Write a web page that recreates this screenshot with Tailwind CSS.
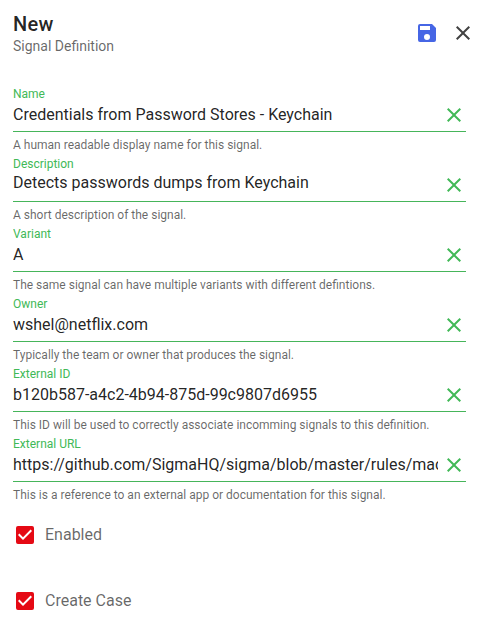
<!DOCTYPE html>
<html lang="en"><head><meta charset="utf-8"><title>New Signal Definition</title>
<script src="https://cdn.jsdelivr.net/npm/@tailwindcss/browser@4"></script></head>
<body class="bg-white font-['Roboto',sans-serif] text-black/87 w-[482px] h-[627px] overflow-hidden">
<header class="flex justify-between pl-[13px] pr-[7px] h-[88px]">
<div class="pt-[8px]"><h1 class="text-[20px] leading-[32px] font-medium tracking-[0.25px]">New</h1><p class="text-[14px] leading-[13px] text-black/60">Signal Definition</p></div>
<div class="flex gap-[12px] pt-[21px]">
<svg class="size-6" viewBox="0 0 24 24"><path fill="#4666e5" d="M15 9H5V5h10m-3 14a3 3 0 0 1-3-3 3 3 0 0 1 3-3 3 3 0 0 1 3 3 3 3 0 0 1-3 3m5-16H5a2 2 0 0 0-2 2v14a2 2 0 0 0 2 2h14a2 2 0 0 0 2-2V7l-4-4Z"/></svg>
<svg class="size-6" viewBox="0 0 24 24"><path fill="#424242" d="M19 6.41 17.59 5 12 10.59 6.41 5 5 6.41 10.59 12 5 17.59 6.41 19 12 13.41 17.59 19 19 17.59 13.41 12Z"/></svg>
</div></header>
<main id="fields" class="pl-[13px] pr-[16px]"></main>
<section class="pl-[13px] pt-[15px] text-[16px] text-black/60">
<label class="flex items-center h-6 gap-2 mb-[42px]"><svg class="size-6" viewBox="0 0 24 24"><path fill="#e50914" d="M10 17 5 12l1.41-1.42L10 14.17l7.59-7.59L19 8m0-5H5a2 2 0 0 0-2 2v14a2 2 0 0 0 2 2h14a2 2 0 0 0 2-2V5a2 2 0 0 0-2-2Z"/></svg>Enabled</label>
<label class="flex items-center h-6 gap-2"><svg class="size-6" viewBox="0 0 24 24"><path fill="#e50914" d="M10 17 5 12l1.41-1.42L10 14.17l7.59-7.59L19 8m0-5H5a2 2 0 0 0-2 2v14a2 2 0 0 0 2 2h14a2 2 0 0 0 2-2V5a2 2 0 0 0-2-2Z"/></svg>Create Case</label>
</section>
<script>
const fields=[["Name","Credentials from Password Stores - Keychain","A human readable display name for this signal."],["Description","Detects passwords dumps from Keychain","A short description of the signal."],["Variant","A","The same signal can have multiple variants with different defintions."],["Owner","wshel@netflix.com","Typically the team or owner that produces the signal."],["External ID","b120b587-a4c2-4b94-875d-99c9807d6955","This ID will be used to correctly associate incomming signals to this definition."],["External URL","https://github.com/SigmaHQ/sigma/blob/master/rules/macos","This is a reference to an external app or documentation for this signal."]];
document.getElementById("fields").innerHTML=fields.map(([l,v,h],i)=>`<div class="h-[70px]"><div class="h-[44px] border-b border-[#46b55a] flex justify-between"><div class="w-[425px] overflow-hidden whitespace-nowrap"><div class="text-[12px] leading-[12px] text-[#41b957]">${l}</div><div class="text-[16px] leading-[20px] ${i===1?"pt-[3px]":"pt-[5px]"}">${v}</div></div><svg class="size-6 mt-[15px]" viewBox="0 0 24 24"><path fill="#41b957" d="M19 6.41 17.59 5 12 10.59 6.41 5 5 6.41 10.59 12 5 17.59 6.41 19 12 13.41 17.59 19 19 17.59 13.41 12Z"/></svg></div><div class="pt-[7px] text-[12px] leading-[12px] text-black/60">${h}</div></div>`).join("");
</script></body></html>
